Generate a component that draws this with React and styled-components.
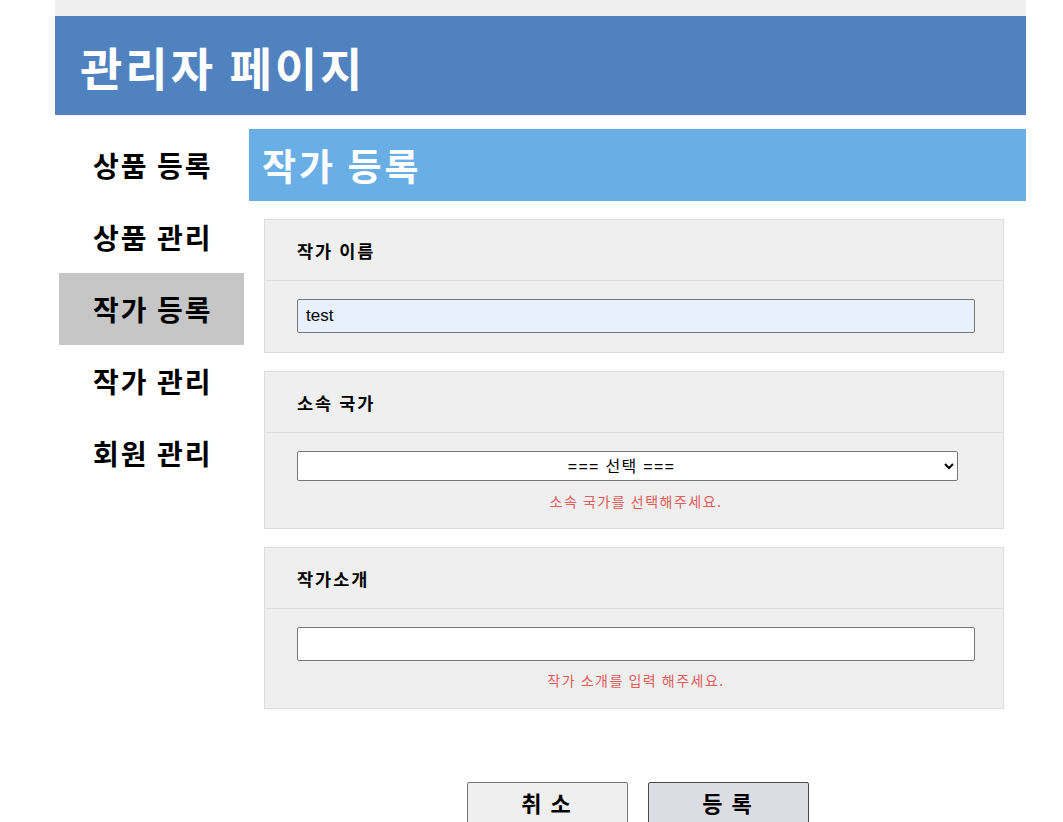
import React from "react";
import styled, { createGlobalStyle } from "styled-components";

const Global = createGlobalStyle`
  html, body { margin: 0; padding: 0; background: #fff; }
  body { font-family: "Noto Sans CJK KR", "Liberation Sans", sans-serif; color: #000; }
  * { box-sizing: border-box; }
`;

const Page = styled.div`
  width: 971px;
  margin-left: 55px;
`;

const TopBar = styled.div`
  height: 16px;
  background: #efefef;
`;

const Header = styled.header`
  height: 99px;
  background: #5082c0;
  display: flex;
  align-items: center;
  padding-left: 25px;
`;

const Title = styled.h1`
  margin: 0;
  color: #fff;
  font-size: 46px;
  font-weight: 700;
  letter-spacing: 3px;
  line-height: 1;
`;

const Body = styled.div`
  display: flex;
  margin-top: 14px;
  gap: 5px;
`;

const Sidebar = styled.nav`
  width: 189px;
  padding-left: 4px;
  display: flex;
  flex-direction: column;
`;

const NavItem = styled.div`
  height: 72px;
  display: flex;
  align-items: center;
  padding-left: 34px;
  font-size: 28px;
  font-weight: 700;
  letter-spacing: 2px;
  background: ${(p) => (p.$active ? "#c6c6c6" : "transparent")};
`;

const Main = styled.main`
  flex: 1;
  display: flex;
  flex-direction: column;
`;

const SubTitle = styled.div`
  height: 72px;
  background: #6aaee6;
  color: #fff;
  display: flex;
  align-items: center;
  padding-left: 13px;
  font-size: 37px;
  font-weight: 700;
  letter-spacing: 3px;
`;

const Sections = styled.div`
  width: 740px;
  margin: 18px 0 0 15px;
  display: flex;
  flex-direction: column;
  gap: 18px;
`;

const Section = styled.section`
  background: #efefef;
  border: 1px solid #dcdcdc;
`;

const SectionHead = styled.div`
  height: 61px;
  display: flex;
  align-items: center;
  padding-left: 32px;
  border-bottom: 1px solid #dcdde2;
  font-size: 17.5px;
  font-weight: 700;
  letter-spacing: 2px;
`;

const SectionBody = styled.div`
  padding: 18px 0 ${(p) => p.$pb || 18}px 32px;
  display: flex;
  flex-direction: column;
`;

const TextInput = styled.input`
  width: 678px;
  height: 34px;
  border: 1px solid #767676;
  border-radius: 2px;
  background: ${(p) => (p.$filled ? "#e8f0fe" : "#fff")};
  font-family: "Liberation Sans", Arial, sans-serif;
  font-size: 17px;
  padding: 0 8px;
  color: #000;
  outline: none;
`;

const Select = styled.select`
  width: 661px;
  height: 30px;
  border: 1px solid #767676;
  border-radius: 2px;
  background: #fff;
  font-family: "Liberation Sans", "Noto Sans CJK KR", sans-serif;
  font-size: 16px;
  letter-spacing: 1.3px;
  text-align: center;
  text-align-last: center;
  color: #000;
  outline: none;
`;

const ErrorText = styled.div`
  width: 678px;
  text-align: center;
  color: #e35b5b;
  font-size: 14px;
  letter-spacing: 1.5px;
  line-height: 20px;
  margin-top: ${(p) => p.$mt || 9}px;
`;

const Buttons = styled.div`
  display: flex;
  justify-content: center;
  gap: 20px;
  margin-top: 73px;
`;

const Button = styled.button`
  width: 161px;
  height: 50px;
  font-family: "Noto Sans CJK KR", sans-serif;
  font-size: 22px;
  font-weight: 700;
  letter-spacing: 2px;
  color: #000;
  border-radius: 2px;
  border: 1px solid ${(p) => (p.$primary ? "#4a4a4a" : "#767676")};
  background: ${(p) => (p.$primary ? "#dcdde2" : "#efefef")};
  display: flex;
  justify-content: center;
  align-items: flex-start;
  padding-top: 3px;
  line-height: 1.5;
`;

export default function App() {
  const nav = ["상품 등록", "상품 관리", "작가 등록", "작가 관리", "회원 관리"];
  return (
    <>
      <Global />
      <Page>
        <TopBar />
        <Header>
          <Title>관리자 페이지</Title>
        </Header>
        <Body>
          <Sidebar>
            {nav.map((n) => (
              <NavItem key={n} $active={n === "작가 등록"}>
                {n}
              </NavItem>
            ))}
          </Sidebar>
          <Main>
            <SubTitle>작가 등록</SubTitle>
            <Sections>
              <Section>
                <SectionHead>작가 이름</SectionHead>
                <SectionBody $pb={19}>
                  <TextInput $filled defaultValue="test" />
                </SectionBody>
              </Section>
              <Section>
                <SectionHead>소속 국가</SectionHead>
                <SectionBody $pb={17}>
                  <Select defaultValue="">
                    <option value="">=== 선택 ===</option>
                    <option value="kr">대한민국</option>
                  </Select>
                  <ErrorText $mt={10}>소속 국가를 선택해주세요.</ErrorText>
                </SectionBody>
              </Section>
              <Section>
                <SectionHead>작가소개</SectionHead>
                <SectionBody $pb={18}>
                  <TextInput />
                  <ErrorText $mt={9}>작가 소개를 입력 해주세요.</ErrorText>
                </SectionBody>
              </Section>
            </Sections>
            <Buttons>
              <Button>취 소</Button>
              <Button $primary>등 록</Button>
            </Buttons>
          </Main>
        </Body>
      </Page>
    </>
  );
}
